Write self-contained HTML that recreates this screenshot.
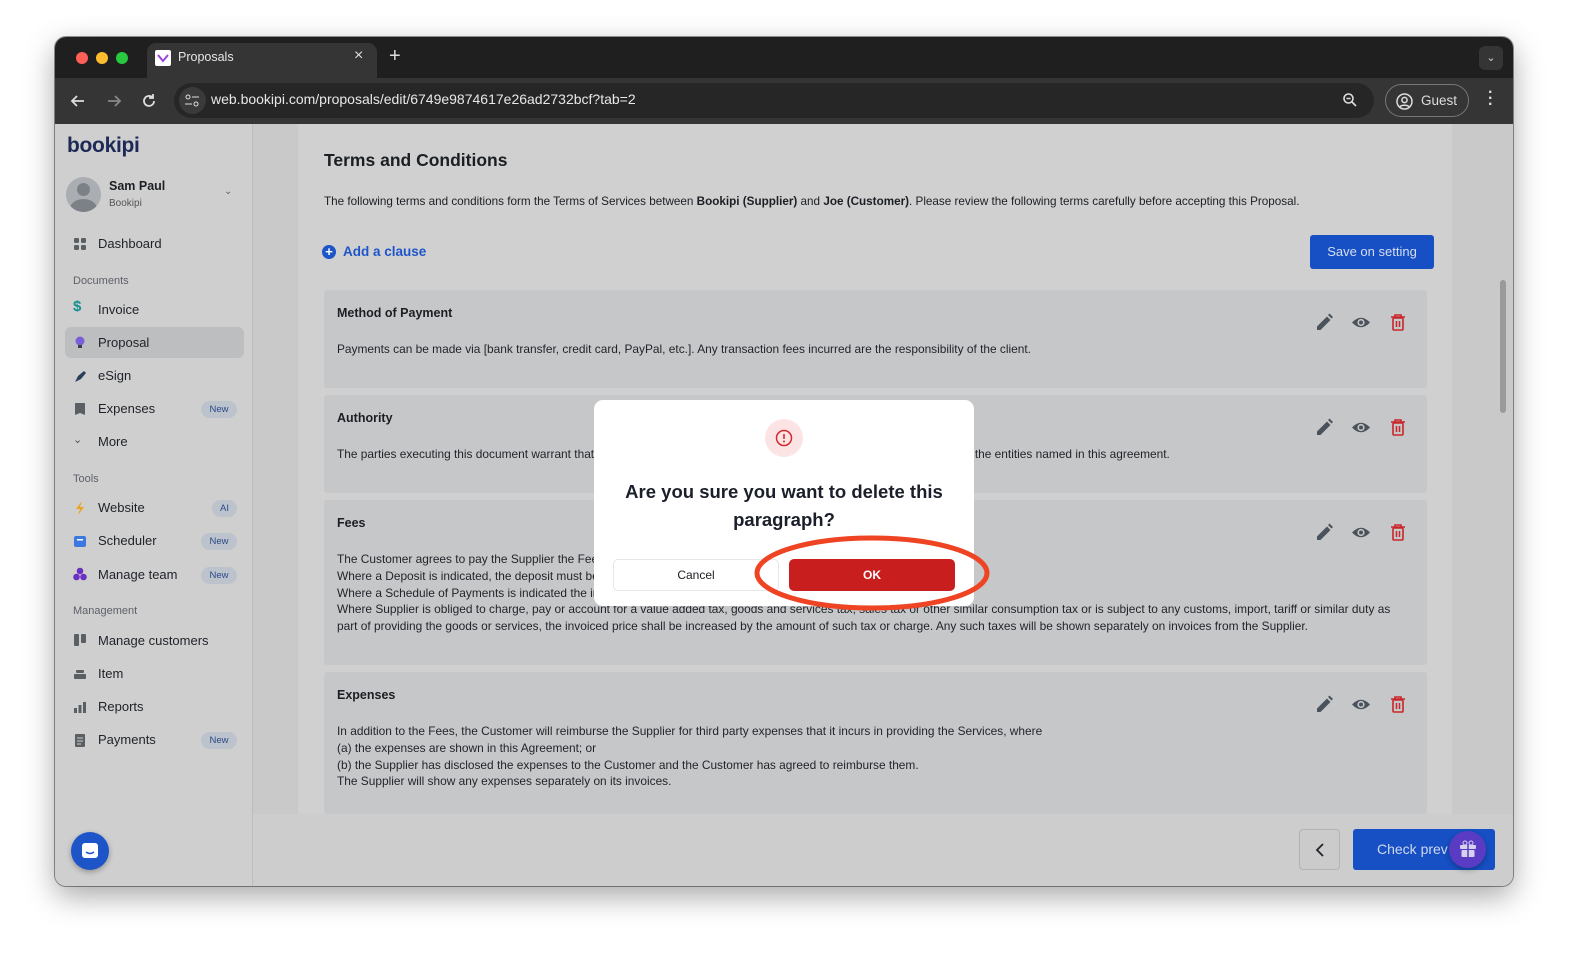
<!DOCTYPE html>
<html><head><meta charset="utf-8">
<style>
*{box-sizing:border-box;margin:0;padding:0}
body{width:1569px;height:960px;background:#fff;font-family:"Liberation Sans",sans-serif;position:relative;overflow:hidden;color:#1b1f24}
.win{position:absolute;left:55px;top:37px;width:1458px;height:849px;border-radius:11px;overflow:hidden;background:#cdcdcd;box-shadow:0 10px 30px rgba(0,0,0,.35),0 0 0 1px rgba(0,0,0,.4)}
.tabbar{position:absolute;left:0;top:0;width:100%;height:41px;background:#1f1f1f}
.dot{position:absolute;top:15px;width:12px;height:12px;border-radius:50%}
.tab{position:absolute;left:92px;top:6px;width:230px;height:36px;background:#353535;border-radius:9px 9px 0 0;color:#e6e6e6;font-size:12.5px}
.toolbar{position:absolute;left:0;top:41px;width:100%;height:46px;background:#353535}
.url{position:absolute;left:119px;top:5px;width:1200px;height:35px;background:#262626;border-radius:18px;color:#e8e8e8;font-size:14px}
.a{position:absolute}
.sb{position:absolute;left:0;top:87px;width:198px;height:762px;background:#cfcfcf;border-right:1px solid #bcbcbc}
.nav{position:absolute;left:43px;font-size:13px;color:#1e2228}
.ic{position:absolute;left:18px;width:14px;height:14px}
.sec{position:absolute;left:18px;font-size:11px;color:#5d6168}
.badge{position:absolute;left:146px;width:36px;height:17px;border-radius:9px;background:#bcc3cd;color:#2c4a86;font-size:9.5px;text-align:center;line-height:17px}
.main{position:absolute;left:198px;top:87px;width:1260px;height:762px;background:#c9c9c9}
.card{position:absolute;left:45px;top:0;width:1154px;height:690px;background:#d0d0d0}
.cl{position:absolute;left:26px;width:1103px;background:#c6c7c8;border-radius:3px}
.cl h4{position:absolute;left:13px;font-size:12.5px;font-weight:bold;color:#1b1f24}
.cl p{position:absolute;left:13px;font-size:11.9px;line-height:16.8px;color:#1f2329;white-space:nowrap}
.txt{font-size:11.7px}
</style></head><body>
<div class="win">
 <div class="tabbar">
  <div class="dot" style="left:21px;background:#fe5f57"></div>
  <div class="dot" style="left:41px;background:#febc2e"></div>
  <div class="dot" style="left:61px;background:#28c840"></div>
  <div class="tab">
   <div class="a" style="left:8px;top:7px;width:16px;height:16px;background:#fff;border-radius:2px"><svg width="16" height="16"><path d="M3 5l5 6 5-6" stroke="#9a44d6" stroke-width="2" fill="none"/></svg></div>
   <div class="a" style="left:31px;top:7px">Proposals</div>
   <div class="a" style="left:207px;top:4px;font-size:16px;color:#ddd">×</div>
  </div>
  <div class="a" style="left:334px;top:8px;color:#ddd;font-size:20px">+</div>
  <div class="a" style="left:1424px;top:9px;width:24px;height:24px;border-radius:6px;background:#353535;color:#ccc;font-size:11px;text-align:center;line-height:24px">⌄</div>
 </div>
 <div class="toolbar">
  <svg class="a" style="left:14px;top:14px" width="18" height="18"><path d="M15 9H3M8 4L3 9l5 5" stroke="#ddd" stroke-width="1.8" fill="none"/></svg>
  <svg class="a" style="left:50px;top:14px" width="18" height="18"><path d="M3 9h12M10 4l5 5-5 5" stroke="#888" stroke-width="1.8" fill="none"/></svg>
  <svg class="a" style="left:85px;top:14px" width="18" height="18"><path d="M14 9a5 5 0 1 1-1.5-3.6M13 2v4h-4" stroke="#ddd" stroke-width="1.8" fill="none"/></svg>
  <div class="url">
   <div class="a" style="left:5px;top:4px;width:27px;height:27px;border-radius:50%;background:#3a3a3a"></div>
   <svg class="a" style="left:10px;top:10px" width="16" height="16"><circle cx="4" cy="4" r="2" stroke="#ddd" fill="none"/><path d="M8 4h7M1 11h7" stroke="#ddd"/><circle cx="12" cy="11" r="2" stroke="#ddd" fill="none"/></svg>
   <div class="a" style="left:37px;top:8px">web.bookipi.com/proposals/edit/6749e9874617e26ad2732bcf?tab=2</div>
   <svg class="a" style="left:1168px;top:9px" width="16" height="16"><circle cx="6.5" cy="6.5" r="4.5" stroke="#ddd" stroke-width="1.6" fill="none"/><path d="M10 10l4 4M4.5 6.5h4" stroke="#ddd" stroke-width="1.6"/></svg>
  </div>
  <div class="a" style="left:1330px;top:6px;width:84px;height:33px;border:1px solid #777;border-radius:17px;color:#ddd;font-size:13.5px">
   <svg class="a" style="left:10px;top:8px" width="17" height="17"><circle cx="8.5" cy="8.5" r="7.5" stroke="#ddd" stroke-width="1.5" fill="none"/><circle cx="8.5" cy="7" r="2.6" stroke="#ddd" stroke-width="1.5" fill="none"/><path d="M3.8 14c1.4-2.4 8-2.4 9.4 0" stroke="#ddd" stroke-width="1.5" fill="none"/></svg>
   <div class="a" style="left:35px;top:8px">Guest</div>
  </div>
  <div class="a" style="left:1433px;top:12px;color:#ddd;font-size:16px;line-height:6px;font-weight:bold">·<br>·<br>·</div>
 </div>

 <div class="sb">
  <div class="a" style="left:12px;top:10px;font-size:21px;font-weight:bold;color:#1d2a57;letter-spacing:-.3px">bookipi</div>
  <div class="a" style="left:11px;top:53px;width:35px;height:35px;border-radius:50%;background:#aaadb1;overflow:hidden"><div class="a" style="left:11px;top:6px;width:13px;height:13px;border-radius:50%;background:#7c8187"></div><div class="a" style="left:4px;top:22px;width:27px;height:20px;border-radius:50%;background:#7c8187"></div></div>
  <div class="a" style="left:54px;top:55px;font-size:12.5px;font-weight:bold">Sam Paul</div>
  <div class="a" style="left:54px;top:74px;font-size:10px;color:#555">Bookipi</div>
  <div class="a" style="left:169px;top:62px;font-size:10px;color:#666">⌄</div>
  <svg class="ic" style="top:113px" width="14" height="14"><rect x="1" y="1" width="5" height="5" rx="1.2" fill="#5a5f66"/><rect x="8" y="1" width="5" height="5" rx="1.2" fill="#5a5f66"/><rect x="1" y="8" width="5" height="5" rx="1.2" fill="#5a5f66"/><rect x="8" y="8" width="5" height="5" rx="1.2" fill="#5a5f66"/></svg>
  <div class="nav" style="top:112px">Dashboard</div>
  <div class="sec" style="top:151px">Documents</div>
  <div class="ic" style="top:176px;color:#158f8f;font-weight:bold;font-size:15px;line-height:14px">$</div>
  <div class="nav" style="top:178px">Invoice</div>
  <div class="a" style="left:10px;top:203px;width:179px;height:31px;border-radius:6px;background:#bdbec0"></div>
  <svg class="ic" style="top:211px" width="14" height="14"><circle cx="7" cy="6" r="4.5" fill="#7a5fd6"/><rect x="5" y="10" width="4" height="3" fill="#3a3f46"/></svg>
  <div class="nav" style="top:211px">Proposal</div>
  <svg class="ic" style="top:245px" width="14" height="14"><path d="M2 13l3-6 6-5 2 2-5 6z" fill="#2d3d5e"/></svg>
  <div class="nav" style="top:244px">eSign</div>
  <svg class="ic" style="top:278px" width="14" height="14"><path d="M2 1h10v12l-5-2-5 2z" fill="#5a5f66"/></svg>
  <div class="nav" style="top:277px">Expenses</div><div class="badge" style="top:277px">New</div>
  <div class="ic" style="top:309px;font-size:11px;color:#555">⌄</div>
  <div class="nav" style="top:310px">More</div>
  <div class="sec" style="top:349px">Tools</div>
  <svg class="ic" style="top:377px" width="14" height="14"><path d="M9 0L3 8h4l-2 6 6-8H7z" fill="#e8a51d"/></svg>
  <div class="nav" style="top:376px">Website</div><div class="badge" style="top:376px;left:157px;width:25px">AI</div>
  <svg class="ic" style="top:410px" width="14" height="14"><rect x="1" y="2" width="12" height="11" rx="2" fill="#3d77e0"/><rect x="4" y="5" width="6" height="1.5" fill="#fff"/></svg>
  <div class="nav" style="top:409px">Scheduler</div><div class="badge" style="top:409px">New</div>
  <svg class="ic" style="top:443px" width="14" height="14"><circle cx="7" cy="4" r="3.3" fill="#6b2fc4"/><circle cx="3.5" cy="10" r="3.3" fill="#6b2fc4"/><circle cx="10.5" cy="10" r="3.3" fill="#6b2fc4"/></svg>
  <div class="nav" style="top:443px">Manage team</div><div class="badge" style="top:443px">New</div>
  <div class="sec" style="top:481px">Management</div>
  <svg class="ic" style="top:509px" width="14" height="14"><rect x="1" y="1" width="5" height="12" rx="1" fill="#5a5f66"/><rect x="8" y="1" width="5" height="9" rx="1" fill="#5a5f66"/></svg>
  <div class="nav" style="top:509px">Manage customers</div>
  <svg class="ic" style="top:543px" width="14" height="14"><rect x="3" y="3" width="8" height="3" rx="1" fill="#5a5f66"/><rect x="1" y="7" width="12" height="5" rx="1" fill="#5a5f66"/></svg>
  <div class="nav" style="top:542px">Item</div>
  <svg class="ic" style="top:576px" width="14" height="14"><rect x="1" y="8" width="3" height="5" fill="#5a5f66"/><rect x="5.5" y="5" width="3" height="8" fill="#5a5f66"/><rect x="10" y="2" width="3" height="11" fill="#5a5f66"/></svg>
  <div class="nav" style="top:575px">Reports</div>
  <svg class="ic" style="top:609px" width="14" height="14"><rect x="2" y="1" width="10" height="13" rx="1" fill="#5a5f66"/><path d="M4 5h6M4 8h6M4 11h4" stroke="#cfcfcf"/></svg>
  <div class="nav" style="top:608px">Payments</div><div class="badge" style="top:608px">New</div>
  <div class="a" style="left:16px;top:708px;width:38px;height:38px;border-radius:50%;background:#1d55c9;box-shadow:0 2px 6px rgba(0,0,0,.3)"><svg class="a" style="left:10px;top:10px" width="18" height="18"><rect x="1" y="1" width="16" height="15" rx="3" fill="#fff"/><path d="M5 10q4 3 8 0" stroke="#1d55c9" stroke-width="1.5" fill="none"/></svg></div>
 </div>

 <div class="main">
  <div class="card">
   <div class="a" style="left:26px;top:26px;font-size:17.5px;font-weight:bold">Terms and Conditions</div>
   <div class="a txt" style="left:26px;top:71px;white-space:nowrap">The following terms and conditions form the Terms of Services between <b>Bookipi (Supplier)</b> and <b>Joe (Customer)</b>. Please review the following terms carefully before accepting this Proposal.</div>
   <div class="a" style="left:24px;top:121px;width:14px;height:14px;border-radius:50%;background:#1d55c9;color:#fff;font-size:13px;line-height:13px;text-align:center;font-weight:bold">+</div>
   <div class="a" style="left:45px;top:120px;font-size:13.5px;font-weight:bold;color:#1d55c9">Add a clause</div>
   <div class="a" style="left:1012px;top:111px;width:124px;height:34px;border-radius:3px;background:#1650c4;color:#d8def0;font-size:13px;text-align:center;line-height:34px">Save on setting</div>

   <div class="cl" style="top:166px;height:98px"><h4 style="top:16px">Method of Payment</h4><p style="top:51px">Payments can be made via [bank transfer, credit card, PayPal, etc.]. Any transaction fees incurred are the responsibility of the client.</p></div>
   <div class="cl" style="top:271px;height:98px"><h4 style="top:16px">Authority</h4><p style="top:51px">The parties executing this document warrant that they have the requisite authority to execute this agreement on behalf of the entities named in this agreement.</p></div>
   <div class="cl" style="top:376px;height:165px"><h4 style="top:16px">Fees</h4><p style="top:51px">The Customer agrees to pay the Supplier the Fees.<br>Where a Deposit is indicated, the deposit must be paid before the commencement of the Services.<br>Where a Schedule of Payments is indicated the invoices must be paid in full by the dates or milestones identified.<br>Where Supplier is obliged to charge, pay or account for a value added tax, goods and services tax, sales tax or other similar consumption tax or is subject to any customs, import, tariff or similar duty as<br>part of providing the goods or services, the invoiced price shall be increased by the amount of such tax or charge. Any such taxes will be shown separately on invoices from the Supplier.</p></div>
   <div class="cl" style="top:548px;height:142px"><h4 style="top:16px">Expenses</h4><p style="top:51px">In addition to the Fees, the Customer will reimburse the Supplier for third party expenses that it incurs in providing the Services, where<br>(a) the expenses are shown in this Agreement; or<br>(b) the Supplier has disclosed the expenses to the Customer and the Customer has agreed to reimburse them.<br>The Supplier will show any expenses separately on its invoices.</p></div>
  </div>
  <div class="a" style="left:1247px;top:156px;width:6px;height:133px;border-radius:3px;background:#9a9a9a"></div>
  <div class="a" style="left:0;top:690px;width:1260px;height:72px;background:#cdcdcd"></div>
  <div class="a" style="left:1046px;top:705px;width:41px;height:41px;border:1px solid #b3b3b3;border-radius:4px;background:#cbcbcb"><svg class="a" style="left:13px;top:12px" width="14" height="16"><path d="M10 2L4 8l6 6" stroke="#1f2329" stroke-width="1.8" fill="none"/></svg></div>
  <div class="a" style="left:1100px;top:705px;width:142px;height:41px;border-radius:3px;background:#1650c4;color:#d0d8ee;font-size:14px;line-height:41px;padding-left:24px">Check prev</div>
  <div class="a" style="left:1196px;top:707px;width:37px;height:37px;border-radius:50%;background:#5a3bc4;box-shadow:0 2px 6px rgba(0,0,0,.3)"><svg class="a" style="left:10px;top:9px" width="18" height="18"><rect x="1" y="5" width="16" height="4" rx="1" fill="#d6d2ee"/><rect x="2.5" y="10" width="13" height="7" rx="1" fill="#d6d2ee"/><path d="M9 5v12" stroke="#5a3bc4" stroke-width="1.5"/><circle cx="6" cy="3" r="2" stroke="#d6d2ee" fill="none"/><circle cx="12" cy="3" r="2" stroke="#d6d2ee" fill="none"/></svg></div>
 </div>
</div>

<svg width="0" height="0" style="position:absolute"><defs>
<g id="acts">
 <path d="M2 17v-3.5L12 3.5l3.5 3.5L5.5 17z M13 2l1.5-1.5 3.5 3.5L16.5 5.5z" fill="#4a535c"/>
 <g transform="translate(37,0)"><path d="M0 9.5Q9 0 18 9.5Q9 19 0 9.5z" fill="#4a535c"/><circle cx="9" cy="9.5" r="3.6" fill="#c6c7c8"/><circle cx="9" cy="9.5" r="2" fill="#4a535c"/></g>
 <g transform="translate(75,0)"><path d="M1 4h14M5 4V2h6v2" stroke="#c8262b" stroke-width="1.6" fill="none"/><rect x="3" y="5" width="10" height="12" rx="1" stroke="#c8262b" stroke-width="1.6" fill="none"/><path d="M6.5 8v6M9.5 8v6" stroke="#c8262b" stroke-width="1.5"/></g>
</g></defs></svg>
<svg style="position:absolute;left:1315px;top:313px" width="100" height="20"><use href="#acts"/></svg>
<svg style="position:absolute;left:1315px;top:418px" width="100" height="20"><use href="#acts"/></svg>
<svg style="position:absolute;left:1315px;top:523px" width="100" height="20"><use href="#acts"/></svg>
<svg style="position:absolute;left:1315px;top:695px" width="100" height="20"><use href="#acts"/></svg>

<div class="a" style="left:594px;top:400px;width:380px;height:206px;background:#fff;border-radius:9px">
 <div class="a" style="left:171px;top:19px;width:38px;height:38px;border-radius:50%;background:#fde4e4"><svg class="a" style="left:10px;top:10px" width="18" height="18"><circle cx="9" cy="9" r="7.5" stroke="#d42a2a" stroke-width="1.5" fill="none"/><path d="M9 5v5" stroke="#d42a2a" stroke-width="1.6"/><circle cx="9" cy="12.5" r="1" fill="#d42a2a"/></svg></div>
 <div class="a" style="left:0;top:78px;width:380px;text-align:center;font-size:18.5px;font-weight:bold;line-height:28px;color:#1b1f2a">Are you sure you want to delete this<br>paragraph?</div>
 <div class="a" style="left:19px;top:159px;width:166px;height:32px;border:1px solid #e6e6e6;border-radius:5px;text-align:center;line-height:30px;font-size:12px;color:#1b1f24">Cancel</div>
 <div class="a" style="left:195px;top:159px;width:166px;height:32px;border-radius:5px;background:#c81e1e;text-align:center;line-height:32px;font-size:12px;color:#fff;font-weight:bold">OK</div>
</div>
<svg style="position:absolute;left:752px;top:533px" width="245" height="80"><ellipse cx="120" cy="40" rx="115" ry="35" stroke="#ee4423" stroke-width="5" fill="none"/></svg>
</body></html>
